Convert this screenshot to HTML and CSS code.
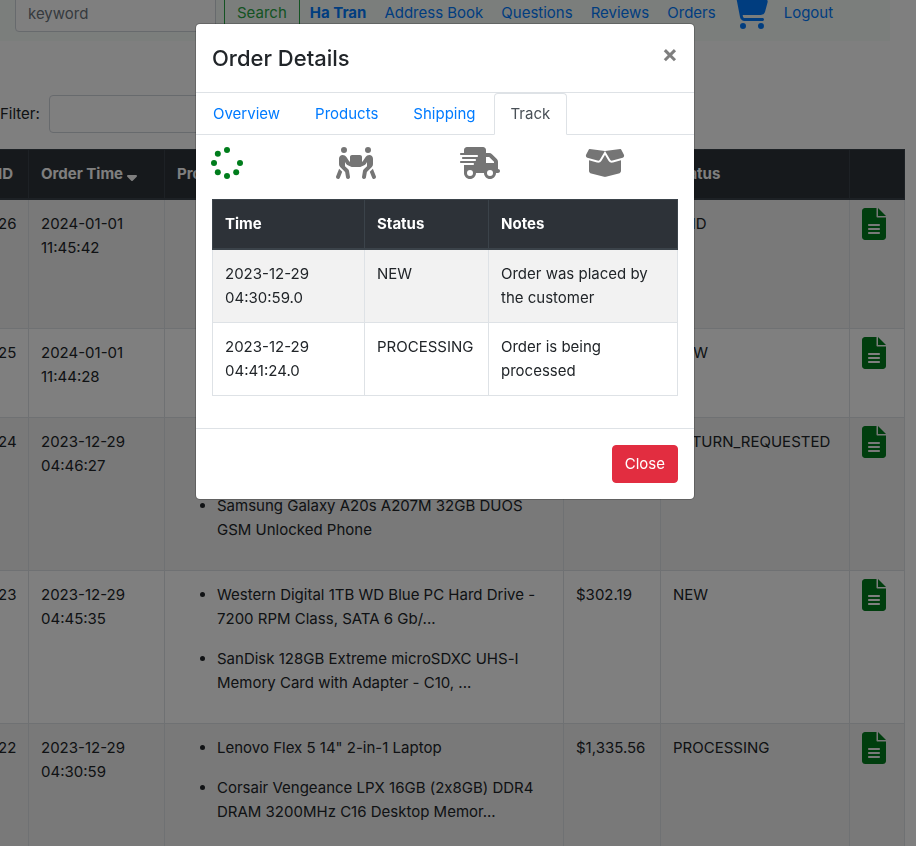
FILE: index.html
```html
<!DOCTYPE html>
<html lang="en">
<head>
<meta charset="utf-8">
<meta name="viewport" content="width=device-width, initial-scale=1">
<title>Order Details</title>
<link rel="stylesheet" href="styles.css">
</head>
<body>
<svg class="sprite" aria-hidden="true">
  <symbol id="file" viewBox="0 0 384 512"><path d="M256 0v128h128L256 0zM232 136V0H48C21.500 0 0 21.500 0 48v416c0 26.500 21.500 48 48 48h288c26.500 0 48-21.500 48-48V152H248c-9 0-16-7-16-16zM112 256H272c8.800 0 16 7.200 16 16s-7.200 16-16 16H112c-8.800 0-16-7.200-16-16s7.200-16 16-16zm0 64H272c8.800 0 16 7.200 16 16s-7.200 16-16 16H112c-8.800 0-16-7.200-16-16s7.200-16 16-16zm0 64H272c8.800 0 16 7.200 16 16s-7.200 16-16 16H112c-8.800 0-16-7.200-16-16s7.200-16 16-16z"/></symbol>
</svg>

<div class="page">
  <nav class="navbar">
    <form class="search">
      <input class="control keyword" type="text" placeholder="keyword" aria-label="Keyword">
      <button class="btn btn-search" type="button">Search</button>
    </form>
    <a class="nav-item" href="#"><b>Ha Tran</b></a>
    <a class="nav-item" href="#">Address Book</a>
    <a class="nav-item" href="#">Questions</a>
    <a class="nav-item" href="#">Reviews</a>
    <a class="nav-item" href="#">Orders</a>
    <a class="nav-item cart" href="#" aria-label="Cart"><svg class="icon-cart" viewBox="0 0 576 512"><path d="M0 24C0 10.7 10.7 0 24 0H69.500c22 0 41.500 12.800 50.600 32h411c26.300 0 45.500 25 38.600 50.400l-41 152.300c-8.500 31.400-37 53.300-69.500 53.300H170.700l5.400 28.500c2.200 11.300 12.100 19.500 23.600 19.500H488c13.300 0 24 10.700 24 24s-10.700 24-24 24H199.700c-34.600 0-64.300-24.600-70.700-58.500L77.400 54.500c-.7-3.800-4-6.500-7.900-6.500H24C10.700 48 0 37.300 0 24zM128 464a48 48 0 1 1 96 0 48 48 0 1 1 -96 0zm336-48a48 48 0 1 1 0 96 48 48 0 1 1 0-96z"/></svg></a>
    <a class="nav-item" href="#">Logout</a>
  </nav>

  <form class="filter">
    <label for="filter">Filter:</label>
    <input class="control" id="filter" type="text">
  </form>

  <table class="table orders">
    <colgroup><col class="c-id"><col class="c-time"><col><col class="c-total"><col class="c-status"><col class="c-action"></colgroup>
    <thead>
      <tr>
        <th>ID</th>
        <th>Order Time <svg class="icon-sort" viewBox="0 0 320 512"><path d="M182.600 470.600c-12.500 12.500-32.800 12.500-45.300 0l-128-128c-9.200-9.200-11.900-22.900-6.900-34.900s16.600-19.800 29.600-19.800H288c12.900 0 24.600 7.800 29.600 19.800s2.200 25.700-6.900 34.900l-128 128z"/></svg></th>
        <th>Products</th><th></th><th>Status</th><th></th>
      </tr>
    </thead>
    <tbody>
      <tr>
        <td>26</td><td>2024-01-01 11:45:42</td>
        <td><ul><li class="one-line"></li><li class="two-line"></li></ul></td>
        <td></td><td>PAID</td>
        <td><a class="details" href="#" aria-label="Order details"><svg><use href="#file"/></svg></a></td>
      </tr>
      <tr>
        <td>25</td><td>2024-01-01 11:44:28</td>
        <td><ul><li class="two-line"></li></ul></td>
        <td></td><td>NEW</td>
        <td><a class="details" href="#" aria-label="Order details"><svg><use href="#file"/></svg></a></td>
      </tr>
      <tr>
        <td>24</td><td>2023-12-29 04:46:27</td>
        <td><ul><li class="two-line"></li><li>Samsung Galaxy A20s A207M 32GB DUOS GSM Unlocked Phone</li></ul></td>
        <td></td><td>RETURN_REQUESTED</td>
        <td><a class="details" href="#" aria-label="Order details"><svg><use href="#file"/></svg></a></td>
      </tr>
      <tr>
        <td>23</td><td>2023-12-29 04:45:35</td>
        <td><ul><li>Western Digital 1TB WD Blue PC Hard Drive - 7200 RPM Class, SATA 6 Gb/...</li><li>SanDisk 128GB Extreme microSDXC UHS-I Memory Card with Adapter - C10, ...</li></ul></td>
        <td>$302.19</td><td>NEW</td>
        <td><a class="details" href="#" aria-label="Order details"><svg><use href="#file"/></svg></a></td>
      </tr>
      <tr>
        <td>22</td><td>2023-12-29 04:30:59</td>
        <td><ul><li>Lenovo Flex 5 14" 2-in-1 Laptop</li><li>Corsair Vengeance LPX 16GB (2x8GB) DDR4 DRAM 3200MHz C16 Desktop Memor...</li></ul></td>
        <td>$1,335.56</td><td>PROCESSING</td>
        <td><a class="details" href="#" aria-label="Order details"><svg><use href="#file"/></svg></a></td>
      </tr>
    </tbody>
  </table>
</div>

<div class="backdrop">
  <div class="modal" role="dialog" aria-labelledby="modal-title">
    <header class="modal-header">
      <h5 id="modal-title">Order Details</h5>
      <button class="close" type="button" aria-label="Close dialog">×</button>
    </header>
    <nav class="tabs">
      <a class="tab" href="#">Overview</a>
      <a class="tab" href="#">Products</a>
      <a class="tab" href="#">Shipping</a>
      <a class="tab active" href="#">Track</a>
    </nav>
    <div class="steps">
      <div class="step done"><svg class="step-icon square" viewBox="0 0 512 512"><circle cx="256" cy="48" r="48"/><circle cx="109" cy="109" r="48"/><circle cx="48" cy="256" r="48"/><circle cx="109" cy="403" r="48"/><circle cx="256" cy="464" r="48"/><circle cx="403" cy="403" r="48"/><circle cx="464" cy="256" r="48"/></svg></div>
      <div class="step"><svg class="step-icon" viewBox="0 0 640 512"><path d="M80 48a48 48 0 1 1 96 0A48 48 0 1 1 80 48zm64 193.700v65.100l51 51c7.100 7.100 11.800 16.200 13.400 26.100l15.200 90.900c2.900 17.400-8.900 33.900-26.300 36.800s-33.900-8.900-36.800-26.300l-14.300-85.900L66.800 320C54.800 308 48 291.700 48 274.700V186.600c0-32.400 26.200-58.600 58.600-58.600c24.100 0 46.500 12 59.900 32l47.400 71.100 10.100 5V160c0-17.700 14.300-32 32-32H384c17.700 0 32 14.300 32 32v76.200l10.100-5L473.500 160c13.300-20 35.800-32 59.900-32c32.400 0 58.600 26.200 58.600 58.600v88.100c0 17-6.700 33.300-18.700 45.300l-79.400 79.400-14.300 85.900c-2.900 17.400-19.400 29.200-36.800 26.300s-29.200-19.400-26.300-36.800l15.200-90.900c1.600-9.900 6.300-19 13.400-26.100l51-51V241.700l-19 28.500c-4.600 7-11 12.600-18.500 16.300l-59.600 29.800c-2.400 1.300-4.900 2.200-7.600 2.800c-2.600 .6-5.300 .9-7.900 .8H256.700c-2.500 .1-5-.2-7.500-.7c-2.900-.6-5.600-1.600-8.100-3l-59.500-29.800c-7.500-3.700-13.800-9.400-18.500-16.300l-19-28.500zM2.300 468.100L50.100 348.600l49.200 49.200-37.600 94c-6.600 16.400-25.200 24.400-41.600 17.800S-4.300 484.500 2.300 468.100zM464 48a48 48 0 1 1 96 0 48 48 0 1 1 -96 0zM589.900 348.600l47.800 119.500c6.600 16.400-1.400 35-17.800 41.600s-35-1.400-41.600-17.800l-37.600-94 49.200-49.200z"/></svg></div>
      <div class="step"><svg class="step-icon" viewBox="0 0 640 512"><path d="M112 0C85.500 0 64 21.500 64 48V96H16c-8.800 0-16 7.200-16 16s7.200 16 16 16H64 272c8.800 0 16 7.200 16 16s-7.200 16-16 16H64 48c-8.800 0-16 7.200-16 16s7.200 16 16 16H64 240c8.800 0 16 7.200 16 16s-7.200 16-16 16H64 16c-8.800 0-16 7.200-16 16s7.200 16 16 16H64 208c8.800 0 16 7.200 16 16s-7.200 16-16 16H64V416c0 53 43 96 96 96s96-43 96-96H384c0 53 43 96 96 96s96-43 96-96h32c17.700 0 32-14.300 32-32s-14.300-32-32-32V288 256 237.300c0-17-6.700-33.300-18.700-45.300L512 114.700c-12-12-28.300-18.700-45.300-18.700H416V48c0-26.500-21.500-48-48-48H112zM544 237.300V256H416V160h50.700L544 237.300zM160 368a48 48 0 1 1 0 96 48 48 0 1 1 0-96zm272 48a48 48 0 1 1 96 0 48 48 0 1 1 -96 0z"/></svg></div>
      <div class="step"><svg class="step-icon" viewBox="0 0 640 512"><path d="M58.900 42.100c3-6.100 9.600-9.600 16.300-8.700L320 64 564.800 33.400c6.700-.8 13.300 2.700 16.300 8.700l41.700 83.400c9 17.900-.6 39.600-19.800 45.100L439.600 217.300c-13.900 4-28.800-1.900-36.200-14.300L320 64 236.600 203c-7.400 12.400-22.300 18.300-36.200 14.300L37.100 170.600c-19.300-5.500-28.800-27.200-19.800-45.100L58.900 42.100zM321.100 128l54.900 91.400c14.900 24.800 44.600 36.600 72.500 28.600L576 211.600v167c0 22-15 41.200-36.400 46.600l-204.100 51c-10.200 2.600-20.900 2.600-31 0l-204.100-51C79 419.700 64 400.500 64 378.500v-167L191.600 248c27.800 8 57.600-3.800 72.500-28.600L318.900 128h2.200z"/></svg></div>
    </div>
    <div class="modal-body">
      <table class="table track">
        <colgroup><col class="t-time"><col class="t-status"><col></colgroup>
        <thead><tr><th>Time</th><th>Status</th><th>Notes</th></tr></thead>
        <tbody>
          <tr><td>2023-12-29 04:30:59.0</td><td>NEW</td><td>Order was placed by the customer</td></tr>
          <tr><td>2023-12-29 04:41:24.0</td><td>PROCESSING</td><td>Order is being processed</td></tr>
        </tbody>
      </table>
    </div>
    <footer class="modal-footer">
      <button class="btn btn-danger" type="button">Close</button>
    </footer>
  </div>
</div>
</body>
</html>
```
FILE: styles.css
```css
*, *::before, *::after { box-sizing: border-box; }

body {
  margin: 0;
  height: 100vh;
  overflow: hidden;
  background: #fff;
  color: #212529;
  font: 15px/24px Inter, "Liberation Sans", sans-serif;
}

a { color: #007bff; text-decoration: none; }
button, input { font: inherit; }
.sprite { display: none; }

/* The page sits scrolled slightly down and right behind the dialog. */
.page { margin: -15px 11px 0 -13px; }

.navbar {
  display: flex;
  align-items: center;
  gap: 2px;
  height: 56px;
  margin-right: 15px;
  padding: 0 28px;
  background: #f6fcf9;
}
.search { display: flex; gap: 8px; }
.keyword { width: 201px; }
.nav-item { display: flex; padding: 8px; white-space: nowrap; }
.cart { padding: 8px 6px; }
.icon-cart { width: 36px; height: 32px; fill: currentColor; }

.control {
  height: 38px;
  padding: 6px 12px;
  border: 1px solid #ced4da;
  border-radius: 4px;
  background: #fff;
  color: #495057;
}
.control::placeholder { color: #6c757d; opacity: 1; }

.btn {
  height: 38px;
  padding: 6px 12px;
  border: 1px solid transparent;
  border-radius: 4px;
}
.btn-search { border-color: #28a745; background: transparent; color: #28a745; }
.btn-danger { border-color: #e22d40; background: #e22d40; color: #fff; }

.filter {
  display: flex;
  align-items: center;
  gap: 9px;
  margin: 54px 0 16px;
  padding-left: 13px;
}

.table {
  width: 100%;
  border-collapse: collapse;
  table-layout: fixed;
}
.table th, .table td {
  padding: 12px;
  border: 1px solid #dee2e6;
  text-align: left;
  vertical-align: top;
}
.table thead th {
  border-color: #3b434a;
  border-bottom-width: 2px;
  background: #2d3238;
  color: #fff;
  white-space: nowrap;
}
.orders tr > :first-child { padding: 12px 12px 12px 10px; }
.table tbody tr:nth-child(odd) { background: #f2f2f2; }
.table ul { margin: 0; padding-left: 40px; font-variant-ligatures: no-contextual; }
.table li { margin-bottom: 16px; }
.one-line { height: 24px; }
.two-line { height: 48px; }

.c-id { width: 41px; }
.c-time { width: 136px; }
.c-total { width: 97px; }
.c-status { width: 189px; }
.c-action { width: 55px; }
.icon-sort { width: 10px; height: 16px; fill: currentColor; vertical-align: -3px; }
.details { display: block; width: 24px; height: 32px; margin-top: -4px; color: #007d1c; }
.details svg { display: block; width: 24px; height: 32px; fill: currentColor; }

.backdrop {
  position: fixed;
  inset: 0;
  padding: 23px 26px 0 0;
  background: rgba(0, 0, 0, .5);
}
.modal {
  max-width: 500px;
  margin: 0 auto;
  border: 1px solid rgba(0, 0, 0, .2);
  border-radius: 5px;
  background: #fff;
  background-clip: padding-box;
}
.modal-header {
  display: flex;
  justify-content: space-between;
  align-items: center;
  padding: 16px;
  border-bottom: 1px solid #dee2e6;
}
.modal-header h5 { margin: 0; font-size: 22px; line-height: 36px; font-weight: 500; }
.close {
  margin: -16px;
  padding: 8px 16px 16px;
  border: 0;
  background: transparent;
  color: #000;
  font-size: 24px;
  font-weight: 700;
  opacity: .5;
}
.tabs { display: flex; gap: 1px; border-bottom: 1px solid #dee2e6; }
.tab {
  margin-bottom: -1px;
  padding: 8px 16px;
  border: 1px solid transparent;
  border-radius: 4px 4px 0 0;
}
.tab.active { border-color: #dee2e6 #dee2e6 #fff; color: #495057; }

.steps { display: grid; grid-template-columns: repeat(4, 1fr); padding: 12px 0 20px; }
.step { padding-left: 15px; color: #757575; }
.done { color: #007d1c; }
.step-icon { display: block; width: 40px; height: 32px; fill: currentColor; }
.square { width: 32px; }

.modal-body { padding: 0 16px 32px; }
.t-time { width: 152px; }
.t-status { width: 124px; }
.modal-footer {
  display: flex;
  justify-content: flex-end;
  padding: 16px;
  border-top: 1px solid #dee2e6;
}
```
